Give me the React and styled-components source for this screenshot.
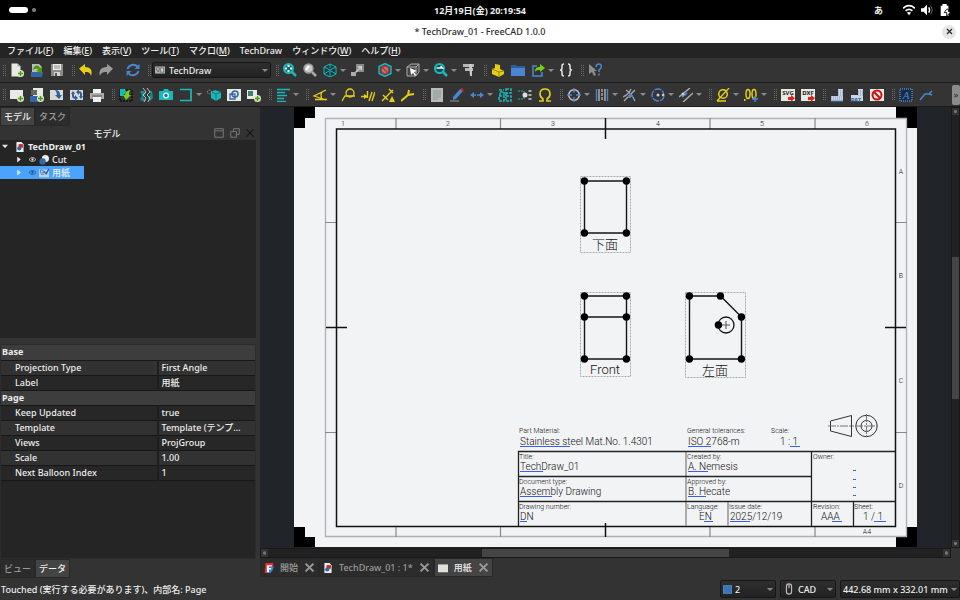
import { Fragment } from "react";
import styled, { createGlobalStyle, css } from "styled-components";

const TEAL = "#19b8bd";
const YELLOW = "#e6cf16";
const BLUE = "#4a86cf";
const GREY = "#b9bdb6";
const PAPER = "#e8eae4";
const GREEN = "#4e9a06";

const GlobalStyle = createGlobalStyle`
  * {
    box-sizing: border-box;
  }

  body {
    margin: 0;
    background-color: #333333;
  }

  body, button, select {
    font-family: "Noto Sans", "Noto Sans CJK JP", sans-serif;
    font-size: 9px;
    font-weight: 500;
    line-height: 13px;
    color: #eeeeee;
  }

  button {
    padding: 0;
    border: none;
    background: none;
  }
`;

const Desktop = styled.div`
  display: flex;
  flex-direction: column;
  height: 100vh;
  min-height: 480px;
  overflow: hidden;
`;

const SystemBar = styled.header`
  display: grid;
  grid-template-columns: 1fr auto 1fr;
  align-items: center;
  height: 20px;
  padding: 0 9px;
  background-color: #000000;
  font-weight: 700;
`;

const Workspaces = styled.div`
  display: flex;
  align-items: center;
  gap: 4px;
`;

const WorkspacePill = styled.span`
  width: ${({ $active }) => ($active ? "19px" : "4px")};
  height: ${({ $active }) => ($active ? "6px" : "4px")};
  border-radius: 3px;
  background-color: ${({ $active }) => ($active ? "#ffffff" : "#808080")};
`;

const SystemTray = styled.div`
  display: flex;
  align-items: center;
  justify-content: flex-end;
  gap: 6px;

  span {
    margin-right: 14px;
  }
`;

const TitleBar = styled.div`
  display: grid;
  grid-template-columns: 1fr auto 1fr;
  align-items: center;
  height: 23px;
  padding: 0 4px;
  background-color: #ffffff;
  color: #2b2b2b;
`;

const WindowTitle = styled.h1`
  grid-column: 2;
  margin: 0;
  font-size: 9px;
  font-weight: 500;
`;

const WindowClose = styled.button`
  display: grid;
  place-items: center;
  justify-self: end;
  width: 14px;
  height: 14px;
  border-radius: 50%;
  background-color: #e6e6e6;
  color: #2b2b2b;
`;

const MenuBar = styled.nav`
  display: flex;
  gap: 10px;
  height: 15px;
  padding: 0 7px;
  background-color: #242424;
`;

const MenuItem = styled.button`
  line-height: 15px;
  white-space: nowrap;
`;

const ToolBar = styled.div`
  display: flex;
  flex-shrink: 0;
  align-items: center;
  height: ${({ $tall }) => ($tall ? "25px" : "24px")};
  border-bottom: 1px solid #1c1c1c;
  background-color: #343434;
  overflow: hidden;
`;

const Grip = styled.span`
  flex: none;
  width: 3px;
  height: 11px;
  margin: 0 1px 0 5px;
  border: 0 dotted #6a6a6a;
  border-width: 0 1px;

  &:first-child {
    margin-left: 3px;
  }
`;

const ToolButton = styled.button`
  display: flex;
  flex: none;
  align-items: center;
  width: ${({ $menu }) => ($menu ? "28px" : "20px")};
  height: 20px;
  padding-left: 3px;
`;

const Spacer = styled.span`
  flex: none;
  width: 7px;
`;

const Arrow = styled.span`
  flex: none;
  width: 0;
  margin-left: 3px;
  border: 3px solid transparent;
  border-top-color: #8a8a8a;
  border-bottom: none;
`;

const Overflow = styled.button`
  width: 8px;
  height: 20px;
  margin-left: auto;
  border-radius: 2px;
  background-color: #8b8b8b;
  color: #333333;
  line-height: 18px;
`;

const Combo = styled.label`
  display: flex;
  align-items: center;
  flex: none;
  width: ${({ $width }) => $width};
  height: ${({ $short }) => ($short ? "16px" : "18px")};
  padding: 0 2px;
  border: 1px solid #171717;
  border-radius: 2px;
  background: linear-gradient(#2e2e2e, #222222);

  select {
    flex: 1;
    min-width: 0;
    margin: 0;
    padding: 0 0 0 ${({ $inset }) => $inset || "3px"};
    border: none;
    outline: none;
    appearance: none;
    background: transparent;
  }
`;

const Workspace = styled.main`
  display: grid;
  grid-template-columns: 256px 1fr;
  column-gap: 4px;
  flex: 1;
  min-height: 0;
`;

const SidePanel = styled.aside`
  display: flex;
  flex-direction: column;
  min-height: 0;
`;

const TabRow = styled.div`
  display: flex;
  height: 19px;
`;

const Tab = styled.button`
  display: flex;
  align-items: center;
  height: 19px;
  padding: 0 3px;
  border: 1px solid #282828;
  background: ${({ $active }) => ($active ? "#444444" : "#2c2c2c")};
  color: ${({ $active }) => ($active ? "#eeeeee" : "#9b9b9b")};
  white-space: nowrap;
`;

const PanelHeader = styled.div`
  display: grid;
  grid-template-columns: 1fr 41px;
  align-items: center;
  height: 14px;
  padding-right: 1px;
  text-align: center;
`;

const PanelActions = styled.div`
  display: flex;
  justify-content: space-between;

  button {
    display: flex;
  }
`;

const Tree = styled.ul`
  flex: 1;
  min-height: 60px;
  margin: 0 0 6px;
  padding: 0;
  background-color: #252525;
  list-style: none;
`;

const TreeRow = styled.li`
  display: flex;
  align-items: center;
  gap: 3px;
  width: ${({ $selected }) => ($selected ? "84px" : "auto")};
  height: 13px;
  padding-left: ${({ $depth }) => ($depth ? "16px" : "2px")};
  background-color: ${({ $selected }) => ($selected ? "#4aa3ff" : "transparent")};
  font-weight: ${({ $depth }) => ($depth ? 500 : 700)};
`;

const TreeArrow = styled.span`
  flex: none;
  width: 6px;
  height: 6px;
  margin-right: 4px;
  background-color: #e4e4e4;
  clip-path: ${({ $open }) =>
    $open ? "polygon(0 20%, 100% 20%, 50% 80%)" : "polygon(20% 0, 80% 50%, 20% 100%)"};
`;

const TreeEye = styled.span`
  color: ${({ $dark }) => ($dark ? "#24507c" : "#dddddd")};
`;

const PropertyArea = styled.div`
  height: 215px;
  border: 1px solid #2c2c2c;
  background-color: #252525;
`;

const PropertyTable = styled.table`
  width: 100%;
  border-collapse: collapse;
  table-layout: fixed;

  th, td {
    height: 15px;
    padding: 0 2px;
    border-bottom: 1px solid #171717;
    line-height: 14px;
    text-align: left;
    white-space: nowrap;
    overflow: hidden;
    text-overflow: ellipsis;
  }

  th {
    padding: 0 1px;
  }

  td + td {
    border-left: 2px solid #1e1e1e;
  }

  td:first-child {
    padding-left: 14px;
  }
`;

const NameColumn = styled.col`
  width: 62%;
`;

const PropertyRow = styled.tr`
  background-color: ${({ $tone }) =>
    ({ group: "#3d3d3d", light: "#323232", dark: "#272727" })[$tone]};
`;

const DocumentArea = styled.section`
  display: grid;
  grid-template-columns: minmax(0, 1fr) 9px;
  grid-template-rows: minmax(0, 1fr) 10px 20px;
  min-height: 0;
`;

const Canvas = styled.div`
  display: flex;
  min-height: 0;
  background-color: #21252a;

  svg {
    flex: 1;
    width: 100%;
    height: 100%;
  }
`;

const ScrollTrack = styled.div`
  display: grid;
  border: 1px solid #191919;
  background-color: #212121;
  ${({ $vertical }) =>
    $vertical
      ? css`
          grid-template-rows: 7px 142fr 142fr 141fr 7px;
        `
      : css`
          grid-template-columns: 7px 214fr 248fr 214fr 7px;
        `}
`;

const ScrollEnd = styled.span`
  background: radial-gradient(#777777 1px, #333333 2px);
`;

const ScrollThumb = styled.span`
  ${({ $vertical }) => ($vertical ? "grid-row: 3;" : "grid-column: 3;")}
  background-color: #454545;
`;

const ScrollLast = styled(ScrollEnd)`
  ${({ $vertical }) => ($vertical ? "grid-row: 5;" : "grid-column: 5;")}
`;

const DocTab = styled(Tab)`
  gap: 6px;
  padding: 0 3px;

  svg:last-child {
    color: #9b9b9b;
  }
`;

const StatusBar = styled.footer`
  display: flex;
  align-items: center;
  gap: 4px;
  height: 22px;
`;

const StatusText = styled.span`
  flex: 1;
  padding-left: 1px;
`;

const badgePlus = (
  <>
    <circle cx="10.5" cy="10.5" r="3.5" fill="#dfe8d6" />
    <path d="M10.5 8v5M8 10.5h5" stroke={GREEN} strokeWidth="1.4" />
  </>
);

const iconShapes = {
  newFile: (
    <>
      <path d="M1.500.5h6l3 3v10h-9z" fill={PAPER} />
      <path d="M7.500.5v3h3z" fill="#aaa" />
      {badgePlus}
    </>
  ),
  open: (
    <>
      <path d="M2 1h7l3 3v6H2z" fill={GREY} />
      <path d="M1 9h12l-1 5H1z" fill="#3465a4" />
      <path d="M3 7c0-5 6-6 7-2l2-1v6L6 8l2-1c-1-2-3-1-5 0z" fill={GREEN} />
    </>
  ),
  save: (
    <>
      <path d="M1 1h12v12H1z" fill="#8a8d88" />
      <path d="M3 1h8v6H3z" fill="#eee" />
      <path d="M4 3h6M4 5h6" stroke="#888" />
      <path d="M4 9h6v4H4z" fill="#d3d7cf" />
      <path d="M5 10h2v3H5z" fill="#555" />
    </>
  ),
  undo: <path d="M0 5.500 6 1v3c5 0 8 3 6 9-1-4-3-4-6-4v3z" fill={YELLOW} />,
  redo: <path d="M14 5.500 8 1v3c-5 0-9 3-7 9 1-4 4-4 7-4v3z" fill="#9b9b9b" />,
  refresh: (
    <>
      <path d="M1.500 6a6 6 0 0 1 10-2.500M12.500 8a6 6 0 0 1-10 2.500" fill="none" stroke={BLUE} strokeWidth="2" />
      <path d="M13.500 1v5h-5zM.5 13V8h5z" fill={BLUE} />
    </>
  ),
  workbench: (
    <>
      <path d="M0 2h14v10H0z" fill="#aeb0ac" />
      <path d="M2 4h4v3H2zM8 4h4v6H8zM3 9h3" fill="#d8d8d8" stroke="#555" />
    </>
  ),
  zoomFit: (
    <>
      <circle cx="5.500" cy="5.500" r="4.500" fill="#136c70" stroke={TEAL} strokeWidth="2" />
      <path d="m9 9 4 4" stroke={TEAL} strokeWidth="2.500" />
      <path d="M5.500 2v7M2 5.500h7" stroke="#fff" strokeDasharray="2 3" strokeWidth="2" />
    </>
  ),
  zoom: (
    <>
      <circle cx="5.500" cy="5.500" r="4.500" fill="#c9c9c9" stroke="#999" strokeWidth="1.500" />
      <path d="m3 7 3-4" stroke="#fff" strokeWidth="2" />
      <path d="m9 9 4 4" stroke="#aaa" strokeWidth="2.500" />
    </>
  ),
  isoCube: (
    <path d="M7 1l6 3v7l-6 3-6-3V4zM1 4l6 3 6-3M7 7v7M7 1v4M1 11l5-3M13 11 8 8" fill="#17383a" stroke={TEAL} />
  ),
  linkTo: (
    <>
      <path d="M5 1h8v8H5z" fill="#888b8b" />
      <path d="m9 5-6 6" stroke="#ccc" strokeWidth="1.500" />
      <path d="M0 9h5v4H0z" fill="#aaa" />
      <path d="M6 3h5v5z" fill="#ccc" />
    </>
  ),
  drawStyle: (
    <>
      <path d="M7 .5l6 3v7l-6 3-6-3v-7z" fill="#125b5f" stroke={TEAL} strokeWidth="1.400" />
      <circle cx="7" cy="7" r="3.800" fill="#8a9092" stroke="#d22" strokeWidth="1.500" />
      <path d="m4.500 4.500 5 5" stroke="#d22" strokeWidth="1.500" />
    </>
  ),
  selectCube: (
    <>
      <path d="M1 4l4-3h8v8l-3 4H1zM1 4h9v9M10 4l3-3" fill="#444" stroke="#aaa" />
      <path d="m4 5 1 7 2-2 2 3 1-1-2-3 3-1z" fill="#fff" />
    </>
  ),
  zoomCycle: (
    <>
      <circle cx="5.500" cy="5.500" r="4.500" fill="#12474a" stroke={TEAL} strokeWidth="2" />
      <path d="m9 9 4 4" stroke={TEAL} strokeWidth="2.500" />
      <path d="M2.500 5h6l-2-2" fill="none" stroke="#e8ffff" strokeWidth="1.300" />
    </>
  ),
  caliper: (
    <>
      <path d="M1 1h11v3H1zM3 5h8v3H3z" fill="#b5b5b5" />
      <path d="M7 1h3v12H8z" fill="#c8c8c8" />
    </>
  ),
  part: (
    <>
      <path d="M4 1l5 1v4l4 2v3l-5 3-7-3V6l3-1z" fill={YELLOW} />
      <path d="m1 6 7 3 5-1M8 9v5" fill="none" stroke="#9a8600" />
    </>
  ),
  folder: (
    <>
      <path d="M0 2h5l1 1h8v3H0z" fill="#2a5d9c" />
      <path d="M0 5h14v8H0z" fill={BLUE} />
    </>
  ),
  exportLink: (
    <>
      <path d="M6 3H2v10h9V9" fill="none" stroke={BLUE} strokeWidth="1.600" />
      <path d="M4 9c0-4 2-5 5-5V1l5 4-5 4V7C7 7 5 7 4 9z" fill="#73d216" />
    </>
  ),
  braces: (
    <path d="M5 1Q3 1 3 3v2q0 2-2 2 2 0 2 2v2q0 2 2 2M9 1q2 0 2 2v2q0 2 2 2-2 0-2 2v2q0 2-2 2" fill="none" stroke="#e4e4e4" strokeWidth="1.500" />
  ),
  whatsThis: (
    <>
      <path d="M1 1v10l3-2 2 4 2-1-2-4h3z" fill="#8d8f8b" />
      <path d="M8 4q0-3 3-3 2.500 0 2.500 2.500Q13 6 11 7v2M11 10.500v2" fill="none" stroke={BLUE} strokeWidth="1.500" />
    </>
  ),
  pageNew: (
    <>
      <path d="M0 2h13v9H0z" fill={PAPER} />
      {badgePlus}
    </>
  ),
  pageTemplate: (
    <>
      <path d="M3 0h10v9H3z" fill={PAPER} />
      <path d="M1 2h6v5H1z" fill="#666" />
      <path d="M0 8h8v6H0z" fill="#3465a4" />
      {badgePlus}
    </>
  ),
  pageRedraw: (
    <>
      <path d="M0 2h13v10H0z" fill="#d9dcd6" />
      <path d="M5 2q5 0 5 5h2l-3 4-4-4h2q0-3-2-5z" fill="#2e5f9e" />
    </>
  ),
  pageSync: (
    <>
      <path d="M0 2h13v10H0z" fill="#d9dcd6" />
      <path d="M3 4v4q0 2 3 2M11 10V6q0-2-3-2" fill="none" stroke="#2e5f9e" strokeWidth="2" />
      <path d="m5 7 3 3-3 3zM9 1 6 4l3 3zM1 6l2-3 2 3zM9 8l2 3 2-3z" fill="#2e5f9e" />
    </>
  ),
  print: (
    <>
      <path d="M3 1h8v5H3z" fill="#f4f4f4" />
      <path d="M0 5h14v6H0z" fill="#aaaca8" />
      <path d="M3 9h8v5H3z" fill="#eee" />
      <path d="M2 8h10" stroke="#555" />
    </>
  ),
  viewInsert: (
    <>
      <path d="M1 2h12v11H1z" fill="none" stroke="#111" strokeDasharray="2 1" strokeWidth="1.500" />
      <path d="M1 1h5l1 3-3 4H1z" fill={TEAL} />
      <path d="M13 2q-3 0-3 5h2l-5 5-3-5h2q0-5 7-5z" fill="#73d216" />
    </>
  ),
  brokenView: (
    <>
      <path d="M1 3h4l2 3-3 3 3 4H3L1 11l2-3zM13 3h-3l2 3-3 3 2 4 3-3z" fill="#178b90" />
      <path d="m4 0 3 4-3 3 3 3-2 4M8 0l3 4-3 3 3 3-2 4" fill="none" stroke="#b6c2c2" />
    </>
  ),
  camera: (
    <>
      <path d="M0 3h4l1-2h4l1 2h4v9H0z" fill={TEAL} />
      <circle cx="7" cy="7.500" r="3" fill="#e4ffff" />
      <circle cx="7" cy="7.500" r="1.700" fill="#137b80" />
    </>
  ),
  section: <path d="M1 1.500h11v11H1" fill="none" stroke={TEAL} strokeWidth="1.700" />,
  detailCube: (
    <>
      <path d="m8 2 6 2v6l-5 3-5-3V4z" fill={TEAL} />
      <path d="m4 4 5 2 5-2M9 6v7" fill="none" stroke="#0c777b" />
      <circle cx="2.500" cy="4" r="2" fill="none" stroke="#aaa" strokeDasharray="1 1" />
    </>
  ),
  draftView: (
    <>
      <path d="M0 1h14v12H0z" fill={PAPER} />
      <circle cx="8" cy="6" r="3" fill="none" stroke="#3465a4" strokeWidth="1.500" />
      <path d="M3 6h5v5H3z" fill="none" stroke="#3465a4" strokeWidth="1.300" />
    </>
  ),
  sheetView: (
    <>
      <path d="M0 2h10v9H0z" fill={PAPER} />
      <path d="M1 3h5v5H1z" fill="#477a7a" />
      {badgePlus}
    </>
  ),
  align: <path d="M1 1.500h13M1 4.500h8M1 7.500h10M1 10.500h7M1 13.500h9" stroke={TEAL} strokeWidth="1.400" />,
  angle: (
    <path d="M13 2 1 8l12 4M2 11.500h12M9 4q-2 3 0 7" fill="none" stroke={YELLOW} strokeWidth="1.300" />
  ),
  balloon: (
    <>
      <circle cx="9" cy="5" r="4" fill="none" stroke={YELLOW} strokeWidth="1.300" />
      <path d="m1 13 3-5h10" fill="none" stroke={YELLOW} strokeWidth="1.300" />
    </>
  ),
  leader: (
    <>
      <path d="M0 8.500h6M6.500 3v7M8 13l3-9M11 13l3-9" fill="none" stroke={YELLOW} strokeWidth="1.400" />
      <path d="M3 6l4 2.500L3 11z" fill={YELLOW} />
    </>
  ),
  dimLength: (
    <>
      <path d="m1 13 11-11M2 7l5 5M8 1l4 4" stroke={YELLOW} strokeWidth="1.400" />
      <path d="m11 8 3 6H8z" fill={YELLOW} />
    </>
  ),
  wrench: <path d="m0 13 7-6 1-5M7 7l6-1" fill="none" stroke={YELLOW} strokeWidth="2" />,
  richText: (
    <>
      <path d="M1 0h12v14H1z" fill="#b8bcb8" />
      <path d="M3 3h8M3 5h8M3 7h8M3 9h8M3 11h5" stroke="#8d979c" />
    </>
  ),
  pencil: (
    <>
      <path d="m3 9 7-8 3 2-7 8-3 1z" fill={BLUE} />
      <path d="m10 1 2-1 2 2-1 2z" fill="#cc2222" />
      <path d="M0 13h9" stroke="#999" />
    </>
  ),
  cosmeticLine: (
    <>
      <path d="M3 7h8" stroke={BLUE} strokeDasharray="3 1" strokeWidth="1.500" />
      <path d="M0 7l4-3v6zM14 7l-4-3v6z" fill={BLUE} />
    </>
  ),
  symbolLock: (
    <path d="M1 8h5v5H1zM8 1h5v4H8zM8 8h5v5H8zM2 8V4h4v4M8 5v4M1 2h5" fill="none" stroke={TEAL} strokeDasharray="3 1" strokeWidth="1.500" />
  ),
  gridPoints: (
    <>
      <path d="M0 3h6v8H0" fill="none" stroke="#168b90" strokeDasharray="2 1" strokeWidth="1.500" />
      <circle cx="7" cy="7" r="2.500" fill="#ddd" />
      <path d="M12 2v10" stroke="#aaa" strokeDasharray="2 2" strokeWidth="3" />
    </>
  ),
  omega: (
    <path d="M1 13h4v-2Q2 9 2 6q0-5 5-5t5 5q0 3-3 5v2h4" fill="none" stroke={YELLOW} strokeWidth="1.600" />
  ),
  centerMark: (
    <>
      <circle cx="7" cy="7" r="5.300" fill="none" stroke="#c8c8c8" strokeWidth="1.500" />
      <path d="M7 0v5M7 9v5M0 7h5M9 7h5" stroke={BLUE} strokeWidth="1.400" />
    </>
  ),
  thread: (
    <>
      <path d="M1.500 1v12M12.500 1v12" stroke={BLUE} strokeWidth="1.400" />
      <path d="M4 1v12M10 1v12" stroke="#aaa" strokeWidth="1.500" />
      <path d="M7 1v12" stroke="#ddd" strokeDasharray="3 1" />
    </>
  ),
  intersection: (
    <>
      <path d="M1 13 12 2M3 2q5 3 9 11M0 9q6-3 8-8" fill="none" stroke="#aaa" strokeWidth="1.300" />
      <path d="M5 8h5M7 5v5" stroke={BLUE} strokeWidth="2" />
    </>
  ),
  cosmeticCircle: (
    <>
      <circle cx="7" cy="7" r="6" fill="none" stroke={BLUE} strokeDasharray="7 1" strokeWidth="1.400" />
      <circle cx="7" cy="7" r="1.500" fill="#ccc" />
      <circle cx="12" cy="7" r="1.200" fill="#ccc" />
    </>
  ),
  parallel: (
    <>
      <path d="M0 9 11 0M4 14 14 5" stroke="#aaa" strokeWidth="1.500" />
      <path d="m3 9 5-4" stroke={BLUE} strokeWidth="2" />
      <circle cx="4" cy="6" r="1.500" fill="#ccc" />
    </>
  ),
  diameter: (
    <>
      <circle cx="7" cy="6" r="4.300" fill="none" stroke={YELLOW} strokeWidth="1.500" />
      <path d="M1 13 13 0M1 13h9" stroke={YELLOW} strokeWidth="1.300" />
    </>
  ),
  addDecimals: (
    <>
      <ellipse cx="4" cy="6" rx="2" ry="4.500" fill="none" stroke={YELLOW} strokeWidth="1.500" />
      <ellipse cx="10" cy="6" rx="2" ry="4.500" fill="none" stroke={YELLOW} strokeWidth="1.500" />
      <path d="M0 12h1.500" stroke={YELLOW} strokeWidth="2" />
      <path d="M11 8v6M8 11h6" stroke={BLUE} strokeWidth="1.600" />
    </>
  ),
  svgFile: (
    <>
      <path d="M0 1h14v12H0z" fill={PAPER} />
      <text x="7" y="6.500" textAnchor="middle" fontSize="6" fontWeight="700" fill="#222">SVG</text>
      <path d="M7 9h3V7l4 3-4 4v-2H7z" fill="#d22" />
    </>
  ),
  dxfFile: (
    <>
      <path d="M0 1h14v12H0z" fill={PAPER} />
      <text x="7" y="6.500" textAnchor="middle" fontSize="6" fontWeight="700" fill="#222">DXF</text>
      <path d="M7 9h3V7l4 3-4 4v-2H7z" fill="#d22" />
    </>
  ),
  hatch: (
    <>
      <path d="M8 1h5v12H1V8h7z" fill="#cdd6e4" />
      <path d="M8 3h5M8 5h5M8 7h5M1 9h12M1 11h12" stroke="#7f99bd" strokeDasharray="1 1" />
      <path d="M1 13h12" stroke={BLUE} />
    </>
  ),
  patHatch: (
    <>
      <path d="M8 1h5v12H1V7h7z" fill="#cdd6e4" />
      <path d="M8 3h5M8 5h5M8 7h5" stroke="#7f99bd" strokeDasharray="1 1" />
      <text x="6" y="13.500" textAnchor="middle" fontSize="6" fontWeight="700" fill="#3465a4">PAT</text>
    </>
  ),
  hideFrame: (
    <>
      <path d="M0 1h14v12H0z" fill={PAPER} />
      <circle cx="7" cy="7" r="4.500" fill="none" stroke="#cc1111" strokeWidth="2" />
      <path d="m4 4 6 6" stroke="#cc1111" strokeWidth="2" />
    </>
  ),
  annotation: (
    <>
      <path d="M1 1h12v12H1z" fill="#1b2b44" stroke={BLUE} strokeDasharray="1 1" strokeWidth="1.500" />
      <text x="7" y="11" textAnchor="middle" fontSize="11" fontStyle="italic" fontFamily="Liberation Serif" fill={BLUE}>A</text>
    </>
  ),
  leaderLine: <path d="m1 12 5-6h4l3-3M10 6l3 1" fill="none" stroke={BLUE} strokeWidth="1.500" />,
  document: (
    <>
      <path d="M2 0h7l3 3v11H2z" fill="#eeeeee" />
      <path d="M5 3h6v5H5z" fill="#cc2222" />
      <circle cx="6" cy="9" r="3" fill="#3465a4" />
    </>
  ),
  eye: (
    <>
      <path d="M0 7q7-8 14 0-7 8-14 0z" fill="none" stroke="currentColor" strokeWidth="1.600" />
      <circle cx="7" cy="7" r="2.300" fill="currentColor" />
    </>
  ),
  cut: (
    <>
      <circle cx="9" cy="5" r="5" fill="#eeeeee" />
      <circle cx="5" cy="9" r="4.500" fill="#3566a8" />
    </>
  ),
  page: (
    <>
      <path d="M0 2h14v11H0z" fill="#b9d5ed" />
      <path d="M2 3h4v4H2zM3 9h4" stroke="#46688a" fill="none" />
      <path d="m7 5 3 3 4-7" fill="none" stroke="#3465a4" strokeWidth="2" />
    </>
  ),
  freecad: (
    <>
      <path d="M2 0h11v4l-6 8-1 2H1z" fill="#ef2929" />
      <path d="M8 5h6l-2 5-3 4H6z" fill="#3584e4" />
      <path d="M4 3h7v2H7v2h3v2H7v4H4z" fill="#fff" />
    </>
  ),
  sheet: <path d="M0 2h14v11H0z" fill="#e0e3dc" />,
  cross: <path d="m2 2 10 10M12 2 2 12" stroke="currentColor" strokeWidth="2.500" />,
  thinCross: <path d="m2 2 10 10M12 2 2 12" stroke="#161616" strokeWidth="1.500" />,
  dock: <path d="M1 1h12v12H1zM1 4h12" fill="none" stroke="#777" strokeWidth="1.400" />,
  float: <path d="M1 5h8v8H1zM5 5V1h8v8H9" fill="none" stroke="#777" strokeWidth="1.400" />,
  wifi: (
    <>
      <path d="M0 5q7-6 14 0M3 8q4-3.500 8 0" fill="none" stroke="#fff" strokeWidth="2" />
      <path d="m4.500 10 2.500 3 2.500-3Q7 8.500 4.500 10z" fill="#fff" />
    </>
  ),
  volume: (
    <>
      <path d="M0 5h3l4-4v12L3 9H0z" fill="#fff" />
      <path d="M9 4q2 3 0 6" fill="none" stroke="#fff" strokeWidth="1.600" />
      <path d="M11 2q4 5 0 10" fill="none" stroke="#777" />
    </>
  ),
  battery: (
    <>
      <path d="M2 2h2V0h5v2h2v12H2z" fill="#fff" />
      <path d="m9 6-3 4h3v4l5-5h-3V6z" fill="#fff" stroke="#000" />
    </>
  ),
  mouse: (
    <path d="M4 4q0-3 3-3t3 3v6q0 3-3 3t-3-3zM7 2v4" fill="none" stroke="#bbb" strokeWidth="1.400" />
  ),
  blueScreen: <path d="M0 1h14v12H0z" fill="#3c74b8" stroke="#6c9fd8" />,
};

const Glyph = styled.svg`
  flex: none;
  display: block;
`;

const Icon = ({ name, size = 14 }) => (
  <Glyph width={size} height={size} viewBox="0 0 14 14" aria-hidden="true">
    {iconShapes[name]}
  </Glyph>
);

const MENUS = [
  ["ファイル", "F"],
  ["編集", "E"],
  ["表示", "V"],
  ["ツール", "T"],
  ["マクロ", "M"],
  ["TechDraw"],
  ["ウィンドウ", "W"],
  ["ヘルプ", "H"],
];

// a trailing "+" marks a tool with a drop-down arrow, "|" a plain gap
const FILE_TOOLS = [
  ["newFile", "open", "save"],
  ["undo", "redo", "|", "refresh"],
];

const VIEW_TOOLS = [
  ["zoomFit", "zoom", "isoCube+", "linkTo", "|", "drawStyle+", "selectCube+", "zoomCycle+", "caliper"],
  ["part", "folder", "exportLink+", "braces"],
  ["whatsThis"],
];

const DRAW_TOOLS = [
  ["pageNew", "pageTemplate", "pageRedraw", "pageSync", "print"],
  ["viewInsert", "brokenView", "camera", "section+", "detailCube", "draftView", "sheetView"],
  ["align+"],
  ["angle+", "balloon", "leader", "dimLength", "wrench"],
  ["richText", "pencil", "cosmeticLine+", "symbolLock", "gridPoints", "omega"],
  ["centerMark+", "thread+", "intersection+", "cosmeticCircle+", "parallel+"],
  ["diameter+", "addDecimals+"],
  ["svgFile", "dxfFile"],
  ["hatch", "patHatch", "hideFrame"],
  ["annotation", "leaderLine"],
];

const ToolGroups = ({ groups }) =>
  groups.map((group) => (
    <Fragment key={group[0]}>
      <Grip />
      {group.map((entry) => {
        if (entry === "|") return <Spacer key="gap" />;
        const name = entry.replace("+", "");
        const hasMenu = entry.endsWith("+");
        return (
          <ToolButton key={name} $menu={hasMenu} aria-label={name}>
            <Icon name={name} />
            {hasMenu && <Arrow />}
          </ToolButton>
        );
      })}
    </Fragment>
  ));

const PROPERTIES = [
  { group: "Base" },
  { name: "Projection Type", value: "First Angle", tone: "light" },
  { name: "Label", value: "用紙", tone: "dark" },
  { group: "Page" },
  { name: "Keep Updated", value: "true", tone: "dark" },
  { name: "Template", value: "Template (テンプ…", tone: "light" },
  { name: "Views", value: "ProjGroup", tone: "dark" },
  { name: "Scale", value: "1.00", tone: "light" },
  { name: "Next Balloon Index", value: "1", tone: "dark" },
];

const ModelPanel = () => (
  <SidePanel>
    <TabRow role="tablist">
      <Tab role="tab" $active>モデル</Tab>
      <Tab role="tab">タスク</Tab>
    </TabRow>
    <PanelHeader>
      <span>モデル</span>
      <PanelActions>
        <button aria-label="dock"><Icon name="dock" size={10} /></button>
        <button aria-label="float"><Icon name="float" size={10} /></button>
        <button aria-label="close"><Icon name="thinCross" size={10} /></button>
      </PanelActions>
    </PanelHeader>
    <Tree>
      <TreeRow>
        <TreeArrow $open />
        <Icon name="document" size={10} />
        TechDraw_01
      </TreeRow>
      <TreeRow $depth={1}>
        <TreeArrow />
        <TreeEye><Icon name="eye" size={7} /></TreeEye>
        <Icon name="cut" size={10} />
        Cut
      </TreeRow>
      <TreeRow $depth={1} $selected>
        <TreeArrow />
        <TreeEye $dark><Icon name="eye" size={7} /></TreeEye>
        <Icon name="page" size={10} />
        用紙
      </TreeRow>
    </Tree>
    <PropertyArea>
      <PropertyTable>
        <colgroup>
          <NameColumn />
          <col />
        </colgroup>
        <tbody>
          {PROPERTIES.map(({ group, name, value, tone }) =>
            group ? (
              <PropertyRow key={group} $tone="group">
                <th colSpan={2}>{group}</th>
              </PropertyRow>
            ) : (
              <PropertyRow key={name} $tone={tone}>
                <td>{name}</td>
                <td>{value}</td>
              </PropertyRow>
            )
          )}
        </tbody>
      </PropertyTable>
    </PropertyArea>
    <TabRow role="tablist">
      <Tab role="tab">ビュー</Tab>
      <Tab role="tab" $active>データ</Tab>
    </TabRow>
  </SidePanel>
);

const SheetText = styled.text`
  font-family: Roboto, "Noto Sans CJK JP", sans-serif;
  font-size: ${({ $size }) => $size || 10}px;
  font-weight: 300;
  fill: #111111;
`;

const COLUMN_MARKS = [49, 154, 259, 364, 468, 573];
const ROW_MARKS = [["A", 67], ["B", 171], ["C", 276], ["D", 381]];

const FIELD_LABELS = [
  ["Part Material:", 225, 326],
  ["General tolerances:", 393, 326],
  ["Scale:", 477, 326],
  ["Title:", 225, 352],
  ["Created by:", 393, 352],
  ["Owner:", 519, 352],
  ["Document type:", 225, 377],
  ["Approved by:", 393, 377],
  ["Drawing number:", 225, 402],
  ["Language:", 393, 402],
  ["Issue date:", 435, 402],
  ["Revision:", 519, 402],
  ["Sheet:", 560, 402],
];

const FIELD_VALUES = [
  ["Stainless steel Mat.No. 1.4301", 226, 338],
  ["ISO 2768-m", 394, 338],
  ["1 : 1", 486, 338],
  ["TechDraw_01", 226, 363],
  ["A. Nemesis", 394, 363],
  ["Assembly Drawing", 226, 388],
  ["B. Hecate", 394, 388],
  ["DN", 226, 413],
  ["EN", 405, 413],
  ["2025/12/19", 436, 413],
  ["AAA", 527, 413],
  ["1 / 1", 569, 413],
];

// [x, baseline, length] of the underline below each editable field
const EDIT_MARKS = [
  [226, 338, 50], [394, 338, 23], [496, 338, 10],
  [226, 363, 23], [394, 363, 20],
  [226, 388, 32], [394, 388, 18],
  [226, 413, 7], [410, 413, 9], [436, 413, 20], [538, 413, 10], [580, 413, 12],
  [559, 362, 3], [559, 371, 3], [559, 379, 3], [559, 387, 3],
];

const VERTICES = [
  [290, 74], [332, 74], [290, 126], [332, 126],
  [290, 189], [332, 189], [290, 210], [332, 210], [290, 252], [332, 252],
  [395, 189], [426, 189], [447, 210], [447, 252], [395, 252], [424, 218],
];

const DrawingSheet = () => (
  <svg viewBox="0 0 623 441" role="img" aria-label="用紙">
    <path d="M0 0h623v440H0z" fill="#f1f3f5" />
    <path d="M0 0h21v11H11v10H0zM602 0h21v21h-11V11h-10zM0 440h21v-10H11v-10H0zM623 440h-21v-10h10v-10h11z" fill="#000" />
    <path d="M31.500 11.500h581v418h-581z" fill="none" stroke="#aeb0b2" strokeWidth="1.300" />
    <path d="M102 11v11M206.500 11v11M416 11v11M521 11v11M102 420v10M206.500 420v10M416 420v10M521 420v10M31 115.500h11M31 325.500h11M602 115.500h11M602 325.500h11" stroke="#888" strokeWidth="1.200" />
    <path d="M42.500 22h559v397.500h-559zM311.500 11v21M311.500 416v14M32 220.500h21M591 220.500h21" fill="none" stroke="#111" strokeWidth="1.500" />
    {COLUMN_MARKS.map((x, i) => (
      <SheetText key={x} x={x} y="19" $size={7} textAnchor="middle">{i + 1}</SheetText>
    ))}
    {ROW_MARKS.map(([letter, y]) => (
      <SheetText key={letter} x="607" y={y} $size={7} textAnchor="middle">{letter}</SheetText>
    ))}
    <SheetText x="573" y="427" $size={7} textAnchor="middle">A4</SheetText>

    <path d="M286.500 69.500h50v76h-50zM286.500 185.500h50v84h-50zM391.500 185.500h60v85h-60z" fill="none" stroke="#aaa" strokeDasharray="2 1" />
    <path d="M290.500 74h42v52h-42zM290.500 189h42v63h-42zM290.500 210h42M395.500 189h31l21 21v42h-52z" fill="none" stroke="#151515" strokeWidth="1.400" />
    <circle cx="432" cy="218" r="8" fill="none" stroke="#151515" strokeWidth="1.300" />
    <path d="M428 218h8M432 214v8" stroke="#555" />
    {VERTICES.map(([x, y]) => (
      <circle key={`${x}-${y}`} cx={x + 0.4} cy={y} r="3.700" />
    ))}
    <SheetText x="311" y="142" $size={13} textAnchor="middle">下面</SheetText>
    <SheetText x="311" y="267" $size={13} textAnchor="middle">Front</SheetText>
    <SheetText x="421" y="268" $size={13} textAnchor="middle">左面</SheetText>

    <path d="M536.500 314 557.500 308.500v21L536.500 324z" fill="none" stroke="#333" />
    <circle cx="572.500" cy="319" r="10.700" fill="none" stroke="#333" />
    <circle cx="572.500" cy="319" r="5.500" fill="none" stroke="#333" />
    <path d="M534 319h26M561 319h23M572.500 307v24" stroke="#777" strokeDasharray="8 1 2 1" />

    <path d="M392 344v75M434 394v25" stroke="#999" strokeWidth="1.600" />
    <path d="M224.500 419.500v-75h377M224 369.500h294M224 394.500h378M517.500 344v75M559.500 394v25" fill="none" stroke="#222" strokeWidth="1.300" />
    {FIELD_LABELS.map(([label, x, y]) => (
      <SheetText key={label} x={x} y={y} $size={7}>{label}</SheetText>
    ))}
    {FIELD_VALUES.map(([value, x, y]) => (
      <SheetText key={value} x={x} y={y}>{value}</SheetText>
    ))}
    {EDIT_MARKS.map(([x, y, length]) => (
      <rect key={`${x}-${y}`} x={x} y={y + 1} width={length} height="1" fill="#3a5cf0" />
    ))}
  </svg>
);

const App = () => {
  return (
    <>
      <GlobalStyle />
      <Desktop>
        <SystemBar>
          <Workspaces>
            <WorkspacePill $active />
            <WorkspacePill />
          </Workspaces>
          <time>12月19日(金) 20:19:54</time>
          <SystemTray>
            <span>あ</span>
            <Icon name="wifi" size={12} />
            <Icon name="volume" size={12} />
            <Icon name="battery" size={12} />
          </SystemTray>
        </SystemBar>
        <TitleBar>
          <WindowTitle>* TechDraw_01 - FreeCAD 1.0.0</WindowTitle>
          <WindowClose aria-label="閉じる">
            <Icon name="cross" size={7} />
          </WindowClose>
        </TitleBar>
        <MenuBar>
          {MENUS.map(([label, key]) => (
            <MenuItem key={label}>
              {label}
              {key && <>(<u>{key}</u>)</>}
            </MenuItem>
          ))}
        </MenuBar>
        <ToolBar $tall>
          <ToolGroups groups={FILE_TOOLS} />
          <Grip />
          <Combo $width="119px" $short $inset="4px">
            <Icon name="workbench" size={10} />
            <select aria-label="ワークベンチ">
              <option>TechDraw</option>
            </select>
            <Arrow />
          </Combo>
          <ToolGroups groups={VIEW_TOOLS} />
        </ToolBar>
        <ToolBar>
          <ToolGroups groups={DRAW_TOOLS} />
          <Overflow aria-label="その他">»</Overflow>
        </ToolBar>
        <Workspace>
          <ModelPanel />
          <DocumentArea>
            <Canvas>
              <DrawingSheet />
            </Canvas>
            <ScrollTrack $vertical>
              <ScrollEnd />
              <ScrollThumb $vertical />
              <ScrollLast $vertical />
            </ScrollTrack>
            <ScrollTrack>
              <ScrollEnd />
              <ScrollThumb />
              <ScrollLast />
            </ScrollTrack>
            <span />
            <TabRow role="tablist">
              <DocTab role="tab">
                <Icon name="freecad" size={10} />
                開始
                <Icon name="cross" size={11} />
              </DocTab>
              <DocTab role="tab">
                <Icon name="document" size={10} />
                TechDraw_01 : 1*
                <Icon name="cross" size={11} />
              </DocTab>
              <DocTab role="tab" $active>
                <Icon name="sheet" size={10} />
                用紙
                <Icon name="cross" size={11} />
              </DocTab>
            </TabRow>
          </DocumentArea>
        </Workspace>
        <StatusBar>
          <StatusText>Touched (実行する必要があります)、内部名: Page</StatusText>
          <Combo $width="56px">
            <Icon name="blueScreen" size={9} />
            <select aria-label="通知">
              <option>2</option>
            </select>
            <Arrow />
          </Combo>
          <Combo $width="56px">
            <Icon name="mouse" size={12} />
            <select aria-label="ナビゲーション">
              <option>CAD</option>
            </select>
            <Arrow />
          </Combo>
          <Combo $width="120px" $inset="0px">
            <select aria-label="寸法">
              <option>442.68 mm x 332.01 mm</option>
            </select>
            <Arrow />
          </Combo>
        </StatusBar>
      </Desktop>
    </>
  );
};

export default App;
